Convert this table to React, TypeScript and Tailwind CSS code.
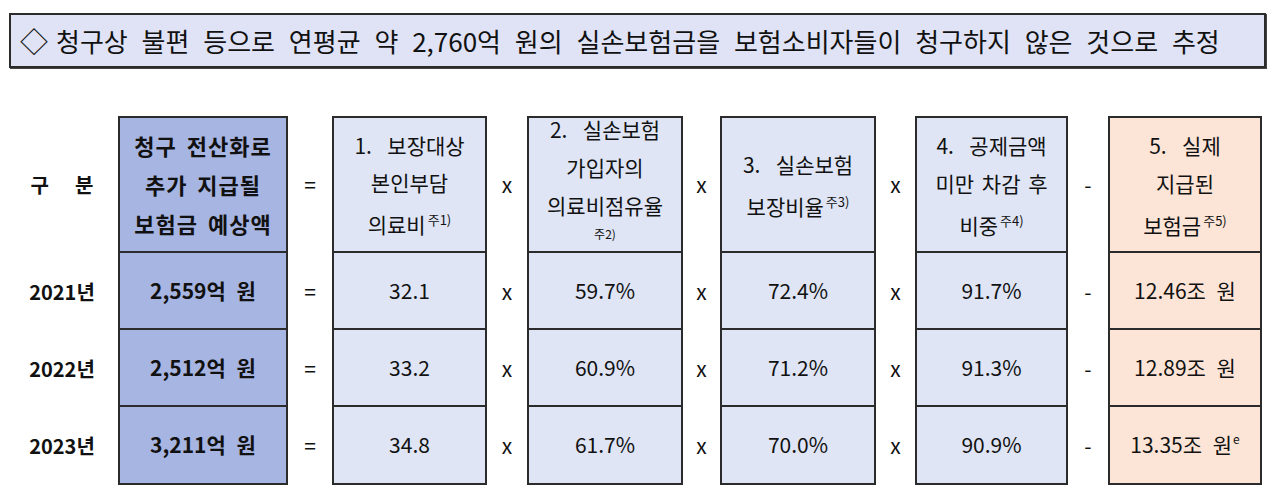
import React from "react";

const FONT = { fontFamily: '"Noto Sans CJK KR", "Noto Sans", sans-serif' };

const years = [
  { y: "2021년", a: "2,559억 원", c1: "32.1", c2: "59.7%", c3: "72.4%", c4: "91.7%", c5: "12.46조 원", e: false },
  { y: "2022년", a: "2,512억 원", c1: "33.2", c2: "60.9%", c3: "71.2%", c4: "91.3%", c5: "12.89조 원", e: false },
  { y: "2023년", a: "3,211억 원", c1: "34.8", c2: "61.7%", c3: "70.0%", c4: "90.9%", c5: "13.35조 원", e: true },
];

function Sup({ children }: { children: React.ReactNode }) {
  return <span className="text-[13px] align-[8px] ml-[2px]">{children}</span>;
}

function Op({ ch }: { ch: string }) {
  return (
    <div className="flex items-center justify-center text-[21px] text-[#111]">{ch}</div>
  );
}

function HeadCell({ bg, children, start }: { bg: string; children: React.ReactNode; start?: boolean }) {
  return (
    <div
      className={`border-2 border-[#2b2b2b] flex flex-col items-center ${start ? "justify-start" : "justify-center"} ${bg} text-[21px] text-[#111] whitespace-pre [word-spacing:3px]`}
    >
      {children}
    </div>
  );
}

function DataCell({ bg, children, bold }: { bg: string; children: React.ReactNode; bold?: boolean }) {
  return (
    <div
      className={`border-2 border-t-0 border-[#2b2b2b] flex items-center justify-center ${bg} text-[21px] text-[#111] [word-spacing:6px] ${bold ? "font-bold" : ""}`}
    >
      <span>{children}</span>
    </div>
  );
}

export default function App() {
  const dark = "bg-[#a7b5e2]";
  const light = "bg-[#dfe5f5]";
  const orange = "bg-[#fce5d7]";
  return (
    <div className="w-[1280px] h-[501px] bg-white overflow-hidden" style={FONT}>
      <div className="pt-[13px] pl-[9px]">
        <div className="w-[1257px] h-[55px] border-2 border-[#2b2b2b] bg-[#dfe3f5] shadow-[1px_1px_0_#444] flex items-center pl-[9px] text-[26px] text-[#111] [word-spacing:8px]">
          <span className="mr-[8px] text-[28px] leading-none">◇</span>
          <span>청구상 불편 등으로 연평균 약 2,760억 원의 실손보험금을 보험소비자들이 청구하지 않은 것으로 추정</span>
        </div>
      </div>

      <div className="mt-[48px] grid grid-cols-[118px_170px_44px_155px_40px_156px_37px_156px_39px_153px_40px_154px] grid-rows-[137px_77px_77px_78px]">
        {/* header row */}
        <div className="flex items-center justify-center pl-[6px] text-[20px] font-bold text-[#111] gap-[26px]">
          <span>구</span>
          <span>분</span>
        </div>
        <HeadCell bg={dark}>
          <div className="font-bold text-[22px] leading-[39px] tracking-[1px] [word-spacing:4px]">청구 전산화로</div>
          <div className="font-bold text-[22px] leading-[39px] tracking-[1px] [word-spacing:4px]">추가 지급될</div>
          <div className="font-bold text-[22px] leading-[39px] tracking-[1px] [word-spacing:4px]">보험금 예상액</div>
        </HeadCell>
        <Op ch="=" />
        <HeadCell bg={light}>
          <div className="leading-[37px]">1.  보장대상</div>
          <div className="leading-[37px]">본인부담</div>
          <div className="leading-[37px]">의료비<Sup>주1)</Sup></div>
        </HeadCell>
        <Op ch="x" />
        <HeadCell bg={light} start>
          <div className="leading-[38px] mt-[-8px]">2.  실손보험</div>
          <div className="leading-[38px]">가입자의</div>
          <div className="leading-[38px]">의료비점유율</div>
          <div className="leading-[20px] text-[12px]">주2)</div>
        </HeadCell>
        <Op ch="x" />
        <HeadCell bg={light}>
          <div className="leading-[38px]">3.  실손보험</div>
          <div className="leading-[38px]">보장비율<Sup>주3)</Sup></div>
        </HeadCell>
        <Op ch="x" />
        <HeadCell bg={light}>
          <div className="leading-[38px]">4.  공제금액</div>
          <div className="leading-[38px]">미만 차감 후</div>
          <div className="leading-[38px]">비중<Sup>주4)</Sup></div>
        </HeadCell>
        <Op ch="-" />
        <HeadCell bg={orange}>
          <div className="leading-[38px]">5.  실제</div>
          <div className="leading-[38px]">지급된</div>
          <div className="leading-[38px]">보험금<Sup>주5)</Sup></div>
        </HeadCell>

        {years.map((r) => (
          <React.Fragment key={r.y}>
            <div className="flex items-center justify-center pl-[6px] text-[20px] font-bold text-[#111]">{r.y}</div>
            <DataCell bg={dark} bold>{r.a}</DataCell>
            <Op ch="=" />
            <DataCell bg={light}>{r.c1}</DataCell>
            <Op ch="x" />
            <DataCell bg={light}>{r.c2}</DataCell>
            <Op ch="x" />
            <DataCell bg={light}>{r.c3}</DataCell>
            <Op ch="x" />
            <DataCell bg={light}>{r.c4}</DataCell>
            <Op ch="-" />
            <DataCell bg={orange}>
              {r.c5}
              {r.e && <span className="text-[12px] align-[9px] ml-[1px]">e</span>}
            </DataCell>
          </React.Fragment>
        ))}
      </div>
    </div>
  );
}
